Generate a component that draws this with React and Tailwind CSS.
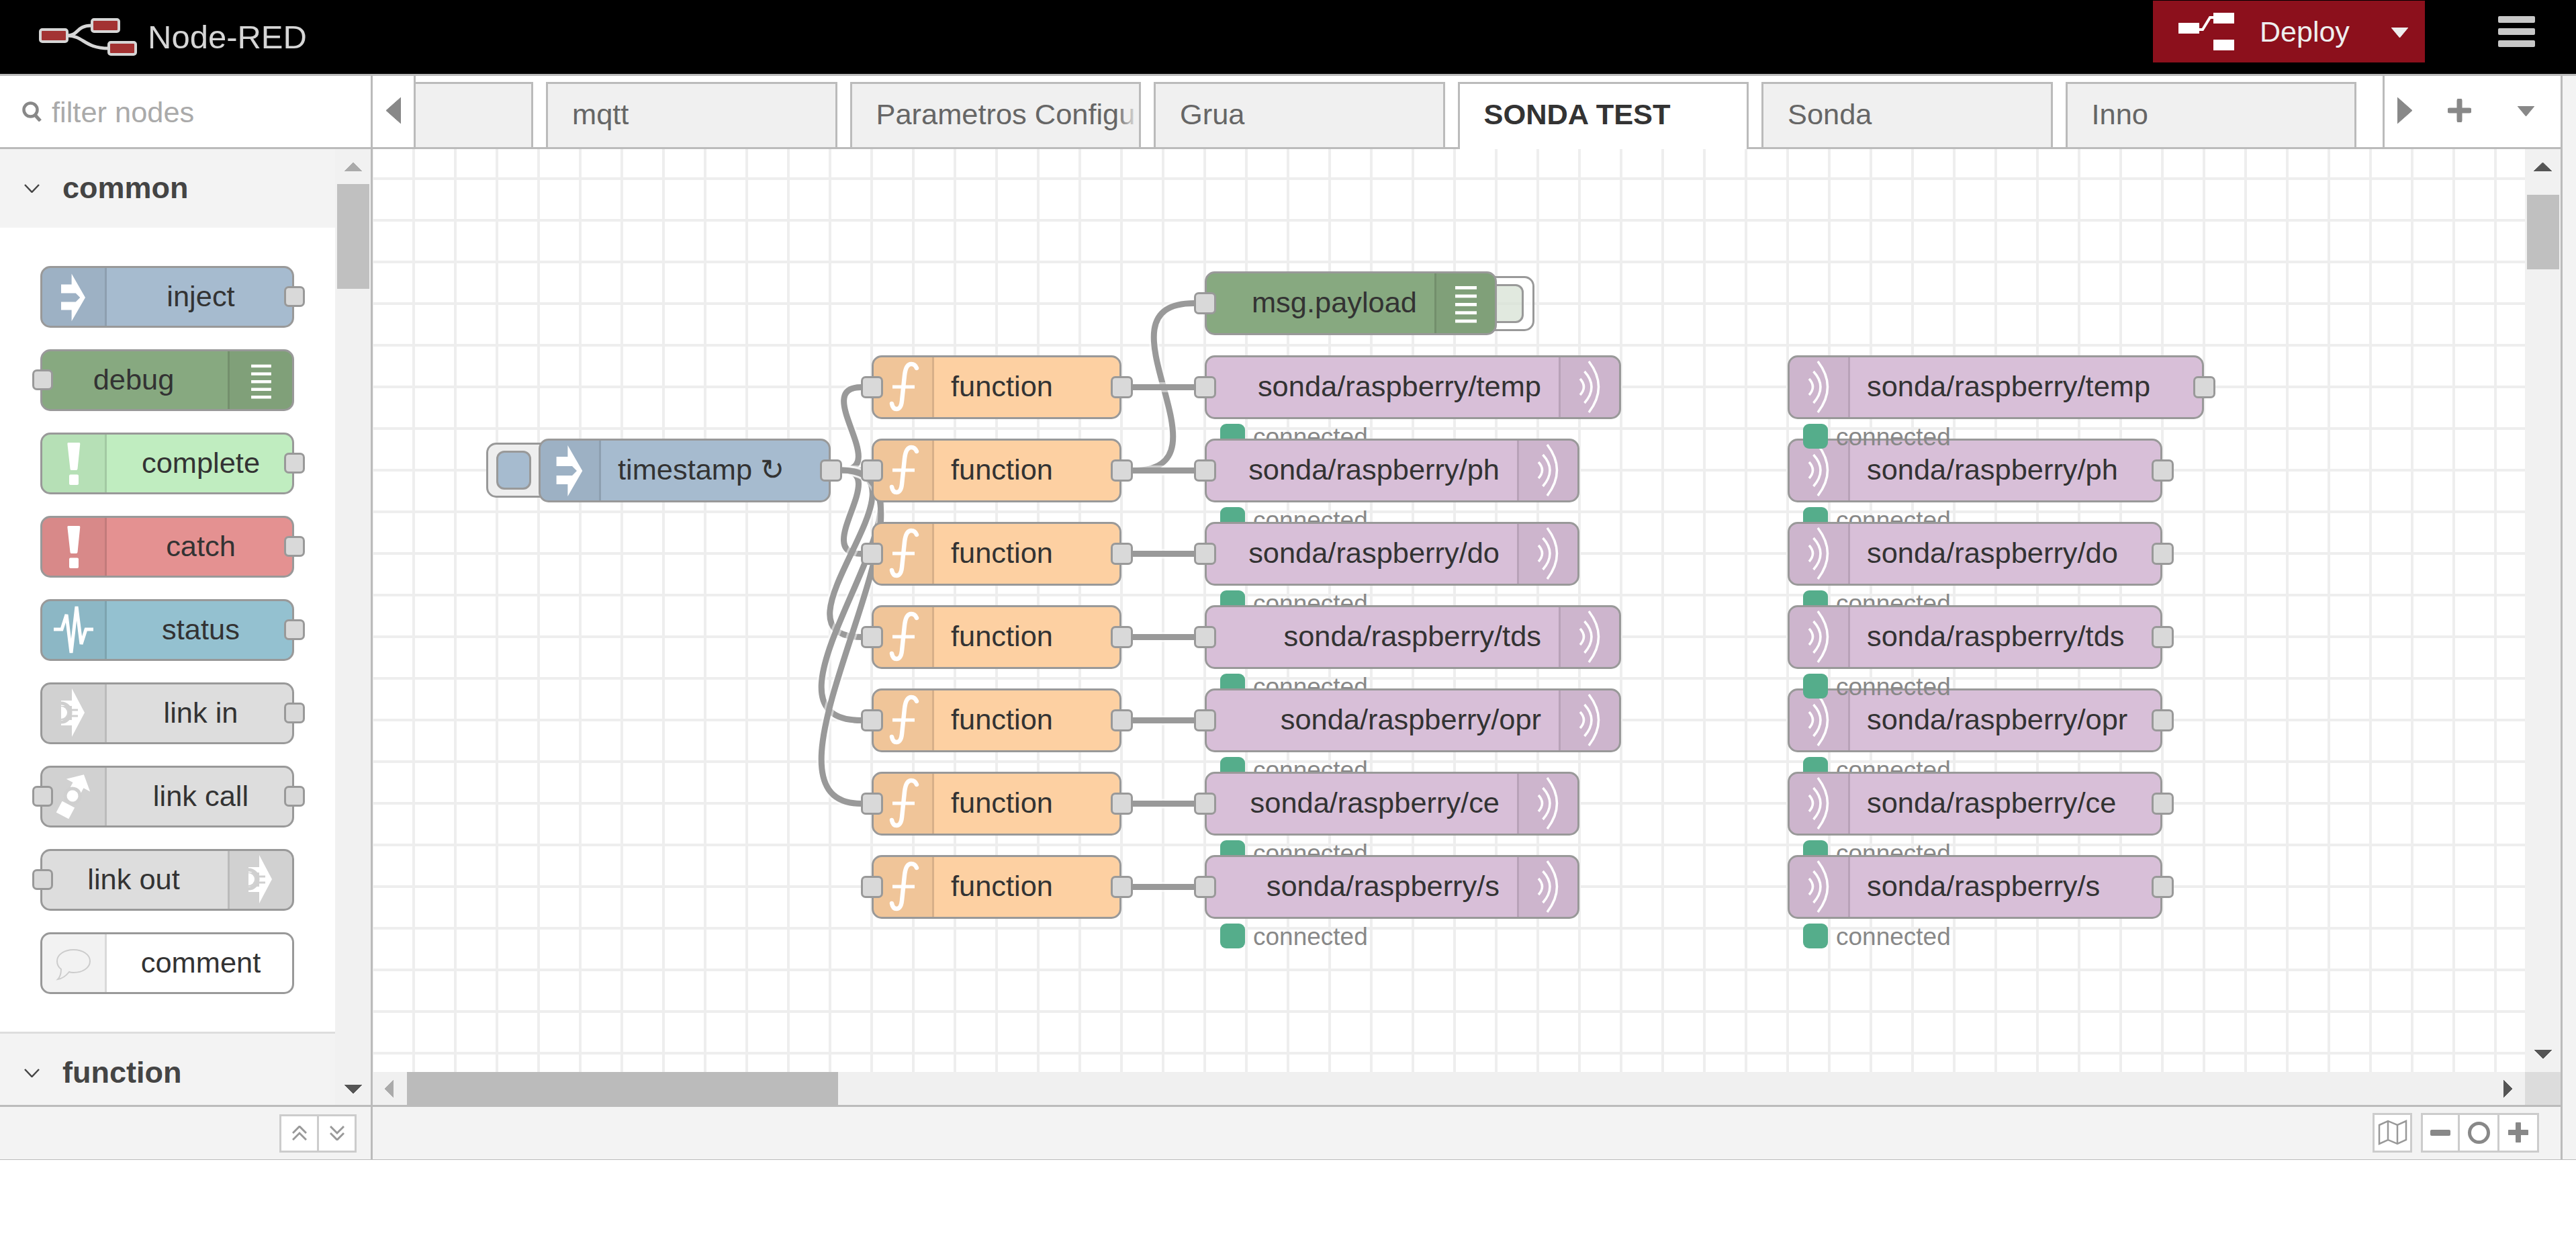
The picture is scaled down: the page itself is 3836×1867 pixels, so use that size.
import React from "react";

// canvas origin in page coordinates, node positions below are page coordinates
const OX = 555;
const OY = 222;
const ROWS = [529, 653, 777, 901, 1025, 1149, 1273];
const SONDA = ["temp", "ph", "do", "tds", "opr", "ce", "s"];
const LEFT_W = [620, 558, 558, 620, 620, 558, 558];
const RIGHT_W = [620, 558, 558, 558, 558, 558, 558];
const RIGHT_ORDER = [1, 0, 2, 4, 3, 5, 6]; // status labels overlap in this order

const at = (x, y, w, h) => ({ left: x - OX, top: y - OY, width: w, height: h });

function Tri({ points, className, w, h }) {
  return (
    <svg viewBox={`0 0 ${w} ${h}`} className={className}>
      <polygon points={points} fill="currentColor" stroke="currentColor" strokeWidth="1" strokeLinejoin="round" />
    </svg>
  );
}

function Logo() {
  return (
    <svg viewBox="58 27 146 56" className="w-[146px] h-[56px] shrink-0">
      <path d="M100 53 C118 53 112 38 137 38 M100 53 C125 53 125 72 162 72" fill="none" stroke="#d6d6d6" strokeWidth="5" />
      <rect x="60" y="44" width="40" height="18" rx="3" fill="#a33333" stroke="#d6d6d6" strokeWidth="4" />
      <rect x="137" y="29" width="40" height="18" rx="3" fill="#a33333" stroke="#d6d6d6" strokeWidth="4" />
      <rect x="162" y="63" width="40" height="18" rx="3" fill="#a33333" stroke="#d6d6d6" strokeWidth="4" />
    </svg>
  );
}

function DeployIcon() {
  return (
    <svg viewBox="0 0 83 56" className="w-[83px] h-[56px] shrink-0">
      <rect x="0" y="15" width="31" height="16" fill="#fff" />
      <rect x="52" y="0" width="31" height="16" fill="#fff" />
      <rect x="52" y="40" width="31" height="16" fill="#fff" />
      <path d="M30 25 L36 25 L47 7 L54 7" fill="none" stroke="#fff" strokeWidth="4" />
    </svg>
  );
}

function Header() {
  return (
    <div className="flex h-[113px] shrink-0 items-center border-b-[3px] border-[#bbb] bg-black pr-[61px]">
      <div className="ml-[58px]">
        <Logo />
      </div>
      <span className="ml-[16px] text-[49px] leading-none text-[#d6d6d6]">Node-RED</span>
      <div className="ml-auto mb-[16px] flex h-[92px] w-[405px] items-center bg-[#8c101c] pl-[38px]">
        <DeployIcon />
        <span className="ml-[38px] text-[43px] leading-none text-[#eee]">Deploy</span>
        <Tri points="0,0 25,0 12.5,15" w={25} h={15} className="ml-auto mr-[25px] mt-[2px] h-[15px] w-[25px] text-[#eee]" />
      </div>
      <div className="ml-[109px] mb-[16px] flex w-[55px] flex-col gap-[8px]">
        <div className="h-[10px] rounded-[2px] bg-[#c7c7c7]" />
        <div className="h-[10px] rounded-[2px] bg-[#c7c7c7]" />
        <div className="h-[10px] rounded-[2px] bg-[#c7c7c7]" />
      </div>
    </div>
  );
}

// ---------- node icons ----------
function InjectIcon({ className = "w-[87px] h-[89px]" }) {
  return (
    <svg viewBox="3 3 87 89" className={className}>
      <path d="M43.4 10 L65.3 48 L43.4 86 V68 H26.6 V55 H50 L57 48 L50 41 H26.6 V27 H43.4 Z" fill="#fff" />
    </svg>
  );
}

function DebugIcon({ className = "w-[87px] h-[89px]" }) {
  return (
    <svg viewBox="3 3 87 89" className={className}>
      {[22, 34.5, 47, 59.3, 71.7].map((y) => (
        <rect key={y} x="31" y={y} width="32" height="4.8" fill="#fff" />
      ))}
    </svg>
  );
}

function FunctionIcon() {
  return (
    <svg viewBox="3 3 87 89" className="h-[89px] w-[87px]">
      <path
        d="M67 19 C65 14 62 13 59 13 C52 13 50 21 49 30 L45 68 C44 77 41 80 37 80 C33 80 31 77 30 72"
        fill="none"
        stroke="#fff"
        strokeWidth="6.5"
        strokeLinecap="round"
      />
      <path d="M31 47 H64" stroke="#fff" strokeWidth="5" />
    </svg>
  );
}

function MqttIcon() {
  return (
    <svg viewBox="3 3 87 89" className="h-[89px] w-[87px]">
      <g fill="none" stroke="#fff" strokeWidth="3.5">
        <path d="M32 35 Q43 47 32 59" />
        <path d="M38.5 24 Q59.5 47 38.5 71" />
        <path d="M45 9 Q74 47 45 85" />
      </g>
    </svg>
  );
}

function AlertIcon() {
  return (
    <svg viewBox="3 3 93 86" className="h-[86px] w-[93px]">
      <path d="M41.5 15 H58 Q59.5 15 59.3 17 L55.5 54 Q55.3 56 53.5 56 H46 Q44.7 56 44.5 54 L40.4 17 Q40.3 15 41.5 15 Z" fill="#fff" />
      <rect x="43" y="62.5" width="14" height="15.5" rx="2" fill="#fff" />
    </svg>
  );
}

function StatusIcon() {
  return (
    <svg viewBox="3 3 93 86" className="h-[86px] w-[93px]">
      <path
        d="M20 45 H32 L39 23 L46 80 L54 11 L61 67 L68 45 H79"
        fill="none"
        stroke="#fff"
        strokeWidth="5"
      />
    </svg>
  );
}

function LinkIcon({ ring = "#cfcfcf" }) {
  return (
    <svg viewBox="3 3 93 86" className="h-[86px] w-[93px]">
      <polygon points="47,9 66,45 47,81" fill="#fff" />
      <rect x="31" y="27" width="17" height="8" fill="#fff" />
      <rect x="31" y="56" width="17" height="8" fill="#fff" />
      <path d="M31 31 A14 14 0 0 1 31 59" fill="none" stroke={ring} strokeWidth="5" />
      <path d="M31 36 A9 9 0 0 1 31 54 Z" fill="#fff" />
      <path d="M46 41 H56 M46 50 H56" stroke={ring} strokeWidth="3" />
    </svg>
  );
}

function LinkCallIcon() {
  return (
    <svg viewBox="3 3 93 86" className="h-[86px] w-[93px]">
      <g transform="rotate(-62 48 45)">
        <rect x="15" y="35" width="19" height="21" fill="#fff" />
        <path d="M58 36 H66 V25 L84 45 L66 65 V54 H58 Z" fill="#fff" />
        <circle cx="48" cy="45" r="11" fill="#fff" stroke="#cfcfcf" strokeWidth="5" />
      </g>
    </svg>
  );
}

function CommentIcon() {
  return (
    <svg viewBox="3 3 93 86" className="h-[86px] w-[93px]">
      <path
        d="M49.5 26 C63 26 74 33 74 43 C74 53 63 60 49.5 60 C47 60 45 60 43 59 C39 64 33 69 26 70 C29 67 31 63 31 55 C27 52 25 48 25 43 C25 33 36 26 49.5 26 Z"
        fill="none"
        stroke="#ccc"
        strokeWidth="2"
      />
    </svg>
  );
}

// ---------- palette ----------
function PalettePort({ side }) {
  return (
    <div
      className={`absolute top-[30px] h-[31px] w-[31px] rounded-[7px] border-[3px] border-[#999] bg-[#d9d9d9] ${
        side === "left" ? "-left-[12px]" : "-right-[16px]"
      }`}
    />
  );
}

function PaletteNode({ label, bg, icon, iconRight, input, output }) {
  const box = (
    <div
      className={`flex h-full w-[96px] shrink-0 items-center justify-center border-black/10 bg-black/5 ${
        iconRight ? "border-l-[3px]" : "border-r-[3px]"
      }`}
    >
      {icon}
    </div>
  );
  return (
    <div className="relative h-[92px] w-[378px]">
      <div className={`flex h-full overflow-hidden rounded-[15px] border-[3px] border-[#999] ${bg}`}>
        {!iconRight && box}
        <div className={`flex-1 text-center text-[43.4px] leading-[84px] text-[#333] ${iconRight ? "pr-[4px]" : "pl-[4px]"}`}>{label}</div>
        {iconRight && box}
      </div>
      {input && <PalettePort side="left" />}
      {output && <PalettePort side="right" />}
    </div>
  );
}

function Category({ name }) {
  return (
    <div className="flex h-[117px] shrink-0 items-center bg-[#f3f3f3] pl-[36px]">
      <svg viewBox="0 0 23 13" className="h-[13px] w-[23px]">
        <path d="M1 1 L11.5 12 L22 1" fill="none" stroke="#444" strokeWidth="2.5" />
      </svg>
      <span className="ml-[34px] pb-[2px] text-[45px] font-bold leading-none text-[#444]">{name}</span>
    </div>
  );
}

function Sidebar() {
  const nodes = [
    { label: "inject", bg: "bg-[#a6bbcf]", icon: <InjectIcon className="h-[83px] w-[81px]" />, output: true },
    { label: "debug", bg: "bg-[#87a980]", icon: <DebugIcon className="h-[83px] w-[81px]" />, iconRight: true, input: true },
    { label: "complete", bg: "bg-[#c0edc0]", icon: <AlertIcon />, output: true },
    { label: "catch", bg: "bg-[#e49191]", icon: <AlertIcon />, output: true },
    { label: "status", bg: "bg-[#94c1d0]", icon: <StatusIcon />, output: true },
    { label: "link in", bg: "bg-[#ddd]", icon: <LinkIcon />, output: true },
    { label: "link call", bg: "bg-[#ddd]", icon: <LinkCallIcon />, input: true, output: true },
    { label: "link out", bg: "bg-[#ddd]", icon: <LinkIcon />, iconRight: true, input: true },
    { label: "comment", bg: "bg-white", icon: <CommentIcon /> },
  ];
  return (
    <div className="flex w-[555px] shrink-0 flex-col border-r-[3px] border-[#bbb]">
      <div className="flex h-[109px] shrink-0 items-center border-b-[3px] border-[#bbb] bg-white pl-[33px]">
        <svg viewBox="0 0 30 30" className="h-[30px] w-[30px] shrink-0">
          <circle cx="12.5" cy="12.5" r="10" fill="none" stroke="#888" strokeWidth="4.5" />
          <path d="M19 20 L27 29" stroke="#888" strokeWidth="5" />
        </svg>
        <span className="ml-[14px] pt-[3px] text-[43.4px] leading-none text-[#aaa]">filter nodes</span>
      </div>

      <div className="flex min-h-0 flex-1">
        <div className="flex w-[499px] shrink-0 flex-col overflow-hidden">
          <Category name="common" />
          <div className="flex h-[1197px] shrink-0 flex-col gap-[32px] bg-white pl-[60px] pt-[57px]">
            {nodes.map((n) => (
              <PaletteNode key={n.label} {...n} />
            ))}
          </div>
          <div className="h-[3px] shrink-0 bg-[#ddd]" />
          <Category name="function" />
        </div>
        <div className="flex w-[53px] shrink-0 flex-col items-center bg-[#f1f1f1]">
          <Tri points="13,0 26,13 0,13" w={26} h={13} className="mt-[20px] h-[13px] w-[26px] text-[#aaa]" />
          <div className="mt-[19px] h-[156px] w-[48px] bg-[#c0c0c0]" />
          <Tri points="0,0 26,0 13,13" w={26} h={13} className="mb-[17px] mt-auto h-[13px] w-[26px] text-[#555]" />
        </div>
      </div>

      <div className="flex h-[81px] shrink-0 items-center justify-end border-t-[3px] border-[#bbb] bg-[#f3f3f3] pr-[21px]">
        <div className="flex h-[57px] border-[3px] border-[#ccc] bg-white">
          <div className="flex w-[53px] items-center justify-center">
            <svg viewBox="0 0 22 22" className="h-[22px] w-[22px]">
              <path d="M1 11 L11 1 L21 11 M1 21 L11 11 L21 21" fill="none" stroke="#999" strokeWidth="3" />
            </svg>
          </div>
          <div className="flex w-[56px] items-center justify-center border-l-[3px] border-[#ccc]">
            <svg viewBox="0 0 22 22" className="h-[22px] w-[22px]">
              <path d="M1 1 L11 11 L21 1 M1 11 L11 21 L21 11" fill="none" stroke="#999" strokeWidth="3" />
            </svg>
          </div>
        </div>
      </div>
    </div>
  );
}

// ---------- tabs ----------
function Tab({ label, active, fade, className = "w-[433.5px]" }) {
  return (
    <div
      className={`relative shrink-0 overflow-hidden whitespace-nowrap border-x-[3px] border-t-[3px] border-[#bbb] pb-[6px] pl-[36px] text-[43.4px] leading-[91px] ${className} ${
        active ? "z-10 -mb-[3px] h-[100px] bg-white font-bold text-[#333]" : "h-[97px] bg-[#f0f0f0] text-[#666]"
      }`}
    >
      {label}
      {fade && <div className="absolute inset-y-0 right-0 w-[34px] bg-[linear-gradient(to_right,#f0f0f000,#f0f0f0)]" />}
    </div>
  );
}

function TabBar() {
  return (
    <div className="flex h-[109px] shrink-0 border-b-[3px] border-[#bbb] bg-white">
      <div className="flex w-[64px] shrink-0 items-center border-r-[3px] border-[#bbb] pb-[3px] pl-[20px]">
        <Tri points="22,0 22,39 0,19.5" w={22} h={39} className="h-[39px] w-[22px] text-[#888]" />
      </div>
      <div className="flex min-w-0 flex-1 items-end gap-[19px] overflow-visible">
        <Tab label="" className="w-[175px] border-l-0" />
        <Tab label="mqtt" />
        <Tab label="Parametros Configu" fade />
        <Tab label="Grua" />
        <Tab label="SONDA TEST" active />
        <Tab label="Sonda" />
        <Tab label="Inno" />
      </div>
      <div className="flex w-[265px] shrink-0 items-center border-l-[3px] border-[#bbb] pb-[3px] pl-[19px]">
        <Tri points="0,0 22,19.5 0,39" w={22} h={39} className="h-[39px] w-[22px] text-[#888]" />
        <svg viewBox="0 0 35 35" className="ml-[53px] h-[35px] w-[35px]">
          <path d="M17.5 3 V32 M3 17.5 H32" stroke="#888" strokeWidth="8" strokeLinecap="round" />
        </svg>
        <Tri points="0,0 25,0 12.5,15" w={25} h={15} className="ml-[69px] mt-[2px] h-[15px] w-[25px] text-[#888]" />
      </div>
    </div>
  );
}

// ---------- flow canvas ----------
function Port({ side, className = "" }) {
  return (
    <div
      className={`absolute top-[31px] h-[33px] w-[33px] rounded-[7px] border-[3px] border-[#999] bg-[#d9d9d9] ${
        side === "left" ? "-left-[16px]" : "-right-[17px]"
      } ${className}`}
    />
  );
}

function FlowNode({ x, y, w, bg, label, icon, iconRight, input, output, status }) {
  const box = (
    <div
      className={`flex h-full w-[90px] shrink-0 items-center justify-center border-black/10 bg-black/5 ${
        iconRight ? "border-l-[3px]" : "border-r-[3px]"
      }`}
    >
      {icon}
    </div>
  );
  return (
    <div className="absolute" style={at(x, y, w, 95)}>
      <div className={`flex h-[95px] overflow-hidden rounded-[15px] border-[3px] border-[#999] ${bg}`}>
        {!iconRight && box}
        <div
          className={`flex-1 whitespace-nowrap text-[43.4px] leading-[87px] text-[#333] ${
            iconRight ? "pr-[26px] text-right" : "pl-[25px]"
          }`}
        >
          {label}
        </div>
        {iconRight && box}
      </div>
      {input && <Port side="left" />}
      {output && <Port side="right" />}
      {status && (
        <div className="absolute left-[23px] top-[101px] flex items-center gap-[12px]">
          <div className="h-[37px] w-[37px] rounded-[9px] bg-[#55ad8b]" />
          <span className="whitespace-nowrap pt-[2px] text-[37px] leading-[37px] text-[#888]">connected</span>
        </div>
      )}
    </div>
  );
}

const wire = (x1, y1, x2, y2) => {
  const delta = Math.hypot(x2 - x1, y2 - y1);
  const o = Math.min(delta * 0.6, 194);
  return `M${x1} ${y1} C${x1 + o} ${y1} ${x2 - o} ${y2} ${x2} ${y2}`;
};

function Wires() {
  const paths = [wire(1687, 700.5, 1778, 451.5)];
  ROWS.forEach((top, i) => {
    if (i < 6) paths.push(wire(1252, 700, 1283, top + 47.5));
    paths.push(wire(1687, top + 47.5, 1778, top + 47.5));
  });
  return (
    <svg viewBox={`${OX} ${OY} 3205 1374`} className="absolute left-0 top-0 h-[1374px] w-[3205px]">
      {paths.map((d, i) => (
        <g key={i} fill="none">
          <path d={d} stroke="#fff" strokeOpacity="0.5" strokeWidth="15" />
          <path d={d} stroke="#999" strokeWidth="9" />
        </g>
      ))}
    </svg>
  );
}

function Canvas() {
  const mqtt = (i) => `sonda/raspberry/${SONDA[i]}`;
  return (
    <div className="relative min-w-0 flex-1 overflow-hidden bg-white bg-[linear-gradient(to_right,#eee_4px,transparent_4px),linear-gradient(to_bottom,#eee_4px,transparent_4px)] bg-[length:62px_62px] bg-[position:59px_42px]">
      <Wires />

      {/* inject button */}
      <div className="absolute rounded-l-[15px] border-[3px] border-[#999] bg-[#eee]" style={at(724, 659, 106, 82)} />
      <div className="absolute rounded-[12px] border-[3px] border-[#999] bg-[#a6bbcf]" style={at(739, 671, 52, 58)} />
      <FlowNode x={802} y={653} w={435} bg="bg-[#a6bbcf]" label="timestamp ↻" icon={<InjectIcon />} output />

      {/* debug toggle */}
      <div className="absolute rounded-r-[15px] border-[3px] border-[#999] bg-white/70" style={at(2200, 411, 85, 82)} />
      <div className="absolute rounded-r-[12px] border-[3px] border-[#999] bg-[#87a980]/25" style={at(2200, 423, 69, 58)} />
      <FlowNode x={1794} y={404} w={435} bg="bg-[#87a980]" label="msg.payload" icon={<DebugIcon />} iconRight input />

      {ROWS.map((y) => (
        <FlowNode key={y} x={1298} y={y} w={372} bg="bg-[#fdd0a2]" label="function" icon={<FunctionIcon />} input output />
      ))}
      {ROWS.map((y, i) => (
        <FlowNode key={y} x={1794} y={y} w={LEFT_W[i]} bg="bg-[#d8bfd8]" label={mqtt(i)} icon={<MqttIcon />} iconRight input status />
      ))}
      {RIGHT_ORDER.map((i) => (
        <FlowNode key={i} x={2662} y={ROWS[i]} w={RIGHT_W[i]} bg="bg-[#d8bfd8]" label={mqtt(i)} icon={<MqttIcon />} output status />
      ))}
    </div>
  );
}

function Workspace() {
  return (
    <div className="flex min-w-0 flex-1 flex-col border-r-[3px] border-[#bbb]">
      <TabBar />
      <div className="flex min-h-0 flex-1">
        <Canvas />
        <div className="flex w-[53px] shrink-0 flex-col items-center bg-[#f1f1f1]">
          <Tri points="13.5,0 27,13 0,13" w={27} h={13} className="mt-[20px] h-[13px] w-[27px] text-[#555]" />
          <div className="mt-[35px] h-[111px] w-[48px] bg-[#c0c0c0]" />
          <Tri points="0,0 26,0 13,13" w={26} h={13} className="mb-[20px] mt-auto h-[13px] w-[26px] text-[#555]" />
        </div>
      </div>
      <div className="flex h-[49px] shrink-0">
        <div className="flex flex-1 items-center bg-[#f0f0f0] pl-[18px]">
          <Tri points="13,0 13,26 0,13" w={13} h={26} className="h-[26px] w-[13px] text-[#aaa]" />
          <div className="ml-[20px] h-full w-[642px] bg-[#bbb]" />
          <Tri points="0,0 13,13 0,26" w={13} h={26} className="ml-auto mr-[19px] h-[26px] w-[13px] text-[#555]" />
        </div>
        <div className="w-[53px] shrink-0 bg-[#dcdcdc]" />
      </div>
      <div className="flex h-[81px] shrink-0 items-center justify-end gap-[13px] border-t-[3px] border-[#bbb] bg-[#f3f3f3] pb-[2px] pr-[32px]">
        <div className="flex h-[59px] w-[59px] items-center justify-center border-[3px] border-[#ccc] bg-white">
          <svg viewBox="0 0 44 38" className="h-[38px] w-[44px]">
            <path d="M2 8 L15 2 L29 8 L42 2 V30 L29 36 L15 30 L2 36 Z M15 2 V30 M29 8 V36" fill="none" stroke="#999" strokeWidth="2.5" />
          </svg>
        </div>
        <div className="flex h-[59px] w-[176px] border-[3px] border-[#ccc] bg-white">
          <div className="flex w-[52px] items-center justify-center">
            <div className="h-[9px] w-[30px] rounded-[2px] bg-[#888]" />
          </div>
          <div className="box-content flex w-[56px] items-center justify-center border-x-[3px] border-[#ccc]">
            <div className="h-[33px] w-[33px] rounded-full border-[5px] border-[#888]" />
          </div>
          <div className="flex flex-1 items-center justify-center">
            <svg viewBox="0 0 30 30" className="h-[30px] w-[30px]">
              <path d="M15 2 V28 M2 15 H28" stroke="#888" strokeWidth="8" strokeLinecap="round" />
            </svg>
          </div>
        </div>
      </div>
    </div>
  );
}

export default function App() {
  return (
    <div className="h-[1867px] w-[3836px] overflow-hidden bg-white [font-family:'Liberation_Sans',Arial,sans-serif]">
      <div className="flex h-[1727px] flex-col border-b border-[#bbb] bg-[#f3f3f3]">
        <Header />
        <div className="flex min-h-0 flex-1">
          <Sidebar />
          <Workspace />
          <div className="w-[20px] shrink-0" />
        </div>
      </div>
    </div>
  );
}
